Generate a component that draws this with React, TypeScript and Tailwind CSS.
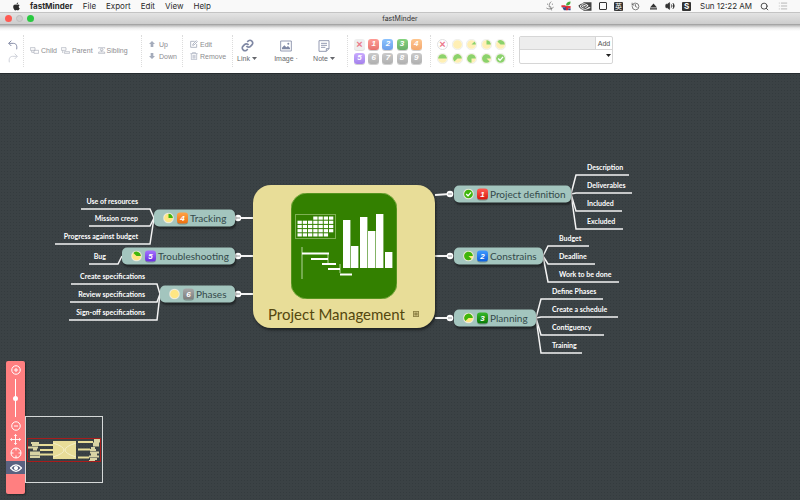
import React from 'react';
import { Search, List, History, Volume2 } from 'lucide-react';
import { FaApple } from 'react-icons/fa';
import { SiNvidia } from 'react-icons/si';

type Side = 'left' | 'right';

interface Leaf {
  text: string;
  y: number;
  end: number;
}

interface Branch {
  title: string;
  side: Side;
  x: number;
  y: number;
  width: number;
  priority: number;
  progress: number;
  bend: number;
  labelX: number;
  leaves: Leaf[];
}

// All coordinates are relative to the middle of the central topic.
const branches: Branch[] = [
  {
    title: 'Tracking', side: 'left', x: -190, y: -38, width: 81, priority: 4, progress: 2, bend: -194, labelX: -206,
    leaves: [
      { text: 'Use of resources', y: -47, end: -263 },
      { text: 'Mission creep', y: -30, end: -255 },
      { text: 'Progress against budget', y: -12, end: -289 },
    ],
  },
  {
    title: 'Troubleshooting', side: 'left', x: -222, y: 0, width: 113, priority: 5, progress: 3, bend: -226, labelX: -238,
    leaves: [{ text: 'Bug', y: 8, end: -255 }],
  },
  {
    title: 'Phases', side: 'left', x: -184, y: 38, width: 75, priority: 6, progress: 0, bend: -187, labelX: -199,
    leaves: [
      { text: 'Create specifications', y: 28, end: -273 },
      { text: 'Review specifications', y: 46, end: -274 },
      { text: 'Sign-off specifications', y: 64, end: -275 },
    ],
  },
  {
    title: 'Project definition', side: 'right', x: 110, y: -62, width: 117, priority: 1, progress: 8, bend: 232, labelX: 243,
    leaves: [
      { text: 'Description', y: -81, end: 285 },
      { text: 'Deliverables', y: -63, end: 288 },
      { text: 'Included', y: -45, end: 278 },
      { text: 'Excluded', y: -27, end: 279 },
    ],
  },
  {
    title: 'Constrains', side: 'right', x: 110, y: 0, width: 89, priority: 2, progress: 7, bend: 204, labelX: 215,
    leaves: [
      { text: 'Budget', y: -10, end: 245 },
      { text: 'Deadline', y: 8, end: 251 },
      { text: 'Work to be done', y: 26, end: 275 },
    ],
  },
  {
    title: 'Planning', side: 'right', x: 110, y: 62, width: 82, priority: 3, progress: 5, bend: 197, labelX: 208,
    leaves: [
      { text: 'Define Phases', y: 43, end: 259 },
      { text: 'Create a schedule', y: 61, end: 274 },
      { text: 'Contiguency', y: 79, end: 260 },
      { text: 'Training', y: 97, end: 238 },
    ],
  },
];

const priorityColors: Record<number, string> = {
  1: 'from-[#ff5a50] to-[#d80f08]',
  2: 'from-[#3f9bff] to-[#0b5fdc]',
  3: 'from-[#35b82c] to-[#067a06]',
  4: 'from-[#ffa245] to-[#ec6f08]',
  5: 'from-[#a672ff] to-[#6a2be0]',
  6: 'from-[#a8a8a8] to-[#7d7d7d]',
};

const PriorityBadge: React.FC<{ value: number }> = ({ value }) => (
  <span
    className={`flex size-[11px] shrink-0 items-center justify-center rounded-[3px] bg-linear-to-b font-['Liberation_Sans',sans-serif] text-[8px] leading-none font-bold italic text-white shadow-[0_1px_0_rgba(0,0,0,0.3)] ${priorityColors[Math.min(value, 6)]}`}
  >
    {value}
  </span>
);

// Eighths of a circle; the wedge always ends at three o'clock and grows counterclockwise.
const ProgressPie: React.FC<{ value: number }> = ({ value }) => {
  const angle = (value * Math.PI) / 4;
  const x = 12 + 9.5 * Math.cos(angle);
  const y = 12 - 9.5 * Math.sin(angle);
  return (
    <svg viewBox="0 0 24 24" className="size-[11px] shrink-0">
      <circle cx="12" cy="12" r="11.500" fill="#f2f2e8" stroke="#d2d4c8" strokeWidth="1" />
      <circle cx="12" cy="12" r="9.500" fill={value === 8 ? '#3fb50c' : '#ffe683'} />
      {value > 0 && value < 8 && (
        <path d={`M12 12 L21.5 12 A9.5 9.5 0 ${value > 4 ? 1 : 0} 0 ${x} ${y} Z`} fill="#3fb50c" />
      )}
      {value === 8 && <path d="M7 12 L11 16 L17.5 8.5" fill="none" stroke="#fff" strokeWidth="3" />}
    </svg>
  );
};

const AppleMenu = () => (
  <header className="flex h-3 items-center bg-[#f9f9f9] pr-3 pl-3 font-['Inter',sans-serif] text-[8px] leading-3 text-[#2b2b2b]">
    <FaApple className="size-[9px]" />
    <nav className="flex flex-1 items-center gap-[10px] pl-[9px]">
      <a href="#app" className="font-bold">fastMinder</a>
      <a href="#file">File</a>
      <a href="#export">Export</a>
      <a href="#edit">Edit</a>
      <a href="#view">View</a>
      <a href="#help">Help</a>
    </nav>
    <div className="flex items-center gap-[7px]">
      <svg viewBox="0 0 20 24" className="h-[10px] w-[8px]" fill="none" stroke="#555" strokeWidth="1.6">
        <path d="M13 1 C8 5 8 10 8 14 H12 C12 18 13 21 14 23 M4 6 V9 M16 6 V9 M1 17 C6 21 14 20 19 15" />
      </svg>
      <svg viewBox="0 0 24 24" className="size-[10px]">
        <path d="M12 11 C12 4 17 1 23 1 C23 8 19 11 12 11 Z" fill="#46a83c" />
        <path d="M1 10 H11 V15 H1 Z M10 12 H23 V18 H10 Z" fill="#e0323c" />
        <path d="M3 15 H13 V22 H7 Z M16 18 H23 V22 H18 Z" fill="#344b8c" />
        <path d="M11 16 H17 V22 H12 Z" fill="#d72834" />
      </svg>
      <SiNvidia className="h-[13px] w-[14px] text-[#444]" />
      <span className="size-2 rounded-[1px] border border-[#333]" />
      <span className="flex h-[9px] w-[9px] items-center justify-center rounded-[1px] bg-[#333] font-['Noto_Sans_CJK_SC',sans-serif] text-[7px] leading-none text-white">英</span>
      <History className="mr-[2px] ml-px size-[9px] text-[#555]" strokeWidth={2} />
      <svg viewBox="0 0 16 16" className="mx-px size-[7px]" fill="#333">
        <path d="M8 1 L16 10 H0 Z M0 12 H16 V15 H0 Z" />
      </svg>
      <Volume2 className="size-[10px] text-[#333]" fill="currentColor" strokeWidth={2} />
      <span className="flex size-[9px] items-center justify-center rounded-[1px] bg-[#333] text-[8px] leading-none font-bold text-white">S</span>
      <span className="ml-[2px] w-[50px] whitespace-nowrap">Sun 12:22 AM</span>
    </div>
    <Search className="ml-[10px] size-[9px] text-[#444]" strokeWidth={2.5} />
    <List className="ml-[9px] size-[10px] text-[#aaa]" />
  </header>
);

const TitleBar = () => (
  <div className="grid h-[13px] grid-cols-3 items-center border-y border-t-[#c4c4c4] border-b-[#a5a5a5] bg-linear-to-b from-[#e4e4e4] to-[#cccccc] px-[5px]">
    <div className="flex gap-1">
      <button aria-label="Close" className="size-[7px] rounded-full bg-[#ff5a52]" />
      <button aria-label="Minimize" className="size-[7px] rounded-full border border-[#bdbdbd] bg-[#cecece]" />
      <button aria-label="Zoom" className="size-[7px] rounded-full bg-[#29c940]" />
    </div>
    <h1 className="text-center font-['Inter',sans-serif] text-[7px] leading-none text-[#333]">fastMinder</h1>
  </div>
);

const Divider = () => <span className="h-8 w-px shrink-0 border-l border-dotted border-[#dcdcdc]" />;

const Caret = () => (
  <svg viewBox="0 0 10 6" className="h-[3px] w-[5px]" fill="currentColor"><path d="M0 0 H10 L5 6 Z" /></svg>
);

const TopicIcon: React.FC<{ kind: 'child' | 'parent' | 'sibling' }> = ({ kind }) => (
  <svg viewBox="0 0 27 21" className="h-[7px] w-[9px]" fill="none" stroke="#a9adb9" strokeWidth="2">
    {kind === 'child' && <path d="M1 2 H15 V10 H1 Z M5 10 V16 H12 M12 10 H26 V19 H12 Z" />}
    {kind === 'parent' && <path d="M1 2 H15 V10 H1 Z M5 10 V18 M10 18 V14 H26 V19 H10 Z" />}
    {kind === 'sibling' && <path d="M5 1 H23 M5 1 V5 M23 1 V5 M10 5 H18 V10 H10 Z M5 20 H23 M5 20 V15 H23 V20 M14 10 V15" />}
  </svg>
);

const Toolbar = () => (
  <div className="flex h-12 items-center bg-[linear-gradient(#b4b4b4,#ececec_3px,#ffffff_6px)] bg-white pt-1 pl-2 font-['Liberation_Sans',sans-serif] text-[7px] leading-none whitespace-nowrap text-[#8c8c90]">
    <div className="flex w-[15px] shrink-0 flex-col gap-[3px]">
      <button aria-label="Undo">
        <svg viewBox="0 0 30 30" className="size-[10px]" fill="none" stroke="#848ba6" strokeWidth="3">
          <path d="M10 2 L2 10 L10 18 M2 10 H16 C24 10 28 16 26 28" />
        </svg>
      </button>
      <button aria-label="Redo">
        <svg viewBox="0 0 30 30" className="size-[10px]" fill="none" stroke="#cfd2da" strokeWidth="3">
          <path d="M20 2 L28 10 L20 18 M28 10 H14 C6 10 2 16 4 28" />
        </svg>
      </button>
    </div>
    <Divider />
    <div className="flex w-[117px] shrink-0 gap-1 pb-px pl-[6px]">
      <button className="flex items-center gap-[2px]"><TopicIcon kind="child" />Child</button>
      <button className="flex items-center gap-[2px]"><TopicIcon kind="parent" />Parent</button>
      <button className="flex items-center gap-px"><TopicIcon kind="sibling" />Sibling</button>
    </div>
    <Divider />
    <div className="flex w-[40px] shrink-0 flex-col gap-[5px] pb-[2px] pl-[7px]">
      <button className="flex items-center gap-1">
        <svg viewBox="0 0 18 18" className="size-[6px]" fill="#a4abbb"><path d="M9 0 L18 9 H13 V18 H5 V9 H0 Z" /></svg>
        Up
      </button>
      <button className="flex items-center gap-1">
        <svg viewBox="0 0 18 18" className="size-[6px]" fill="#a4abbb"><path d="M9 18 L18 9 H13 V0 H5 V9 H0 Z" /></svg>
        Down
      </button>
    </div>
    <Divider />
    <div className="flex w-[49px] shrink-0 flex-col gap-1 pb-[2px] pl-[7px]">
      <button className="flex items-center gap-[2px]">
        <svg viewBox="0 0 24 24" className="size-[8px]" fill="none" stroke="#a4abbb" strokeWidth="2.5">
          <path d="M14 4 H2 V22 H20 V12" /><path d="M8 16 L9 12 L19 2 L22 5 L12 15 Z" />
        </svg>
        Edit
      </button>
      <button className="flex items-center gap-[2px]">
        <svg viewBox="0 0 24 24" className="size-[8px]" fill="none" stroke="#a4abbb" strokeWidth="2">
          <path d="M1 5 H23 M8 5 V1 H16 V5 M4 5 V23 H20 V5 M9 9 V20 M12 9 V20 M15 9 V20" />
        </svg>
        Remove
      </button>
    </div>
    <Divider />
    <div className="flex w-[114px] shrink-0 items-end pb-[2px] pl-1 text-[#66676c]">
      <button className="flex w-[20px] flex-col items-center gap-[3px]">
        <svg viewBox="0 0 24 24" className="size-[13px]" fill="none" stroke="#7f88a4" strokeWidth="3">
          <path d="M10 13 a5 5 0 0 0 7.5 .5 l3-3 a5 5 0 0 0 -7 -7 l-2 2" />
          <path d="M14 11 a5 5 0 0 0 -7.500 -.5 l-3 3 a5 5 0 0 0 7 7 l2 -2" />
        </svg>
        <span className="flex items-center gap-[2px]">Link <Caret /></span>
      </button>
      <button className="ml-[17px] flex w-[24px] flex-col items-center gap-[3px]">
        <svg viewBox="0 0 36 36" className="size-[12px]" fill="none" stroke="#7f88a4" strokeWidth="2.5">
          <path d="M2 3 H34 V33 H2 Z" />
          <path d="M6 28 V23 L13 16 L19 22 L24 18 L30 24 V28 Z" fill="#7f88a4" stroke="none" />
          <circle cx="25" cy="11" r="3" fill="#7f88a4" stroke="none" />
        </svg>
        <span>Image ·</span>
      </button>
      <button className="ml-[15px] flex w-[22px] flex-col items-center gap-[3px]">
        <svg viewBox="0 0 36 36" className="size-[12px]" fill="none" stroke="#7f88a4" strokeWidth="2.5">
          <path d="M3 2 H33 V26 L25 34 H3 Z M33 26 H25 V34 M9 10 H27 M9 16 H27 M9 22 H22" />
        </svg>
        <span className="flex items-center gap-[2px]">Note <Caret /></span>
      </button>
    </div>
    <Divider />
    <div className="mx-[5px] grid w-[72px] shrink-0 grid-cols-5 gap-y-[3px] pl-px opacity-60">
      <button aria-label="No priority" className="flex size-[11px] items-center justify-center rounded-[3px] bg-[#e4e4e4] text-[11px] font-bold text-[#e0203c] shadow-[0_1px_0_rgba(0,0,0,0.2)]">×</button>
      {[1, 2, 3, 4, 5, 6, 7, 8, 9].map((n) => (
        <button key={n} aria-label={`Priority ${n}`}><PriorityBadge value={n} /></button>
      ))}
    </div>
    <Divider />
    <div className="mr-[3px] ml-[6px] grid w-[73px] shrink-0 grid-cols-5 gap-y-[3px] opacity-60">
      <button aria-label="No progress" className="flex size-[11px] items-center justify-center rounded-full border border-[#ccc] text-[11px] font-bold text-[#e0203c]">×</button>
      {[0, 1, 2, 3, 4, 5, 6, 7, 8].map((n) => (
        <button key={n} aria-label={`Progress ${n}/8`}><ProgressPie value={n} /></button>
      ))}
    </div>
    <Divider />
    <div className="mb-[2px] ml-[5px] flex h-7 w-[94px] shrink-0 flex-col overflow-hidden rounded-[2px] border border-[#d6d6d6] bg-white">
      <div className="flex h-[13px] border-b border-[#d6d6d6]">
        <input aria-label="Tag" className="min-w-0 flex-1 border-r border-[#d6d6d6] bg-[#ededed]" />
        <button className="w-4 text-[#555]">Add</button>
      </div>
      <div className="relative flex-1">
        <select aria-label="Tags" className="block size-full appearance-none" />
        <span className="pointer-events-none absolute top-1 right-px text-[#222]"><Caret /></span>
      </div>
    </div>
  </div>
);

const Connectors = () => (
  <svg className="absolute top-0 left-0 size-px overflow-visible" fill="none" stroke="#f4f4f4" strokeWidth="1.5">
    {branches.map((b) => {
      const left = b.side === 'left';
      const joint = left ? b.x : b.x + b.width;
      const toggle = left ? -106 : 106;
      const edge = left ? -91 : 91;
      return (
        <g key={b.title}>
          <path d={`M${edge} ${b.y === -62 ? -61 : b.y} L${toggle} ${b.y}`} strokeWidth="2" />
          {b.leaves.map((leaf) => (
            <path key={leaf.text} d={`M${joint} ${b.y} L${b.bend} ${leaf.y} H${leaf.end}`} />
          ))}
          <circle cx={toggle} cy={b.y} r="3.300" fill="#fff" stroke="none" />
          <path d={`M${toggle - 2} ${b.y} h4`} stroke="#8b8f90" strokeWidth="1" />
        </g>
      );
    })}
  </svg>
);

const bars = [[52, 27, 8], [60, 53, 8], [69, 24, 8], [77, 38, 8], [85, 21, 8], [94, 59, 8]];

const ProjectLogo = () => (
  <svg viewBox="0 0 106 106" className="size-[106px] shrink-0">
    <rect width="106" height="106" rx="16" fill="#338000" stroke="#78a83e" />
    <rect x="4.500" y="21.500" width="40" height="24" fill="none" stroke="#7fb055" />
    {[0, 1, 2, 3, 4].map((row) =>
      [0, 1, 2, 3, 4, 5, 6].map((col) => {
        const empty = (row === 0 && col < 3) || (row === 4 && col > 5);
        return empty ? null : (
          <rect key={`${row}-${col}`} x={6.5 + col * 5.25} y={23.5 + row * 4.2} width="4.300" height="3.200" fill="#fff" />
        );
      }),
    )}
    {bars.map(([x, y, w]) => (
      <rect key={x} x={x} y={y} width={w - 0.6} height={75 - y} fill="#fff" />
    ))}
    <path d="M11 54 V86 M37 60 V72 M49 71 V80" stroke="#b5d49c" strokeWidth="1" />
    <path d="M11 60.500 H38 M20 66 H37 M31 71 H45 M37 76 H49 M49 81.500 H61" stroke="#fff" strokeWidth="2" />
  </svg>
);

const MindMap = () => (
  <div className="absolute top-[182px] left-[43%] size-0 font-['Lato',sans-serif] whitespace-nowrap">
    <Connectors />
    <div className="absolute -top-[71px] -left-[91px] flex h-[143px] w-[182px] flex-col items-center rounded-[18px] bg-[#e8dd98] pt-2 shadow-[1px_2px_3px_rgba(0,0,0,0.5)]">
      <ProjectLogo />
      <div className="flex w-full items-center justify-between pr-4 pl-[15px] text-[15px] leading-[30px] text-[#54470f]">
        <h2>Project Management</h2>
        <svg viewBox="0 0 18 18" className="size-[6px]" fill="none" stroke="#54470f" strokeWidth="2">
          <path d="M1 1 H17 V17 H1 Z M4 6 H14 M4 9 H14 M4 12 H14" />
        </svg>
      </div>
    </div>
    {branches.map((b) => (
      <React.Fragment key={b.title}>
        <div
          className="absolute flex h-[17px] -translate-y-1/2 items-center rounded-[5px] bg-[#a3c5be] pl-[9px] text-[10px] leading-none text-[#33494a] shadow-[1px_2px_2px_rgba(0,0,0,0.4)]"
          style={{ left: b.x, top: b.y, width: b.width }}
        >
          <ProgressPie value={b.progress} />
          <span className="mr-[2px] ml-[3px]"><PriorityBadge value={b.priority} /></span>
          <span className="pb-[2px]">{b.title}</span>
        </div>
        {b.leaves.map((leaf) => (
          <span
            key={leaf.text}
            className={`absolute text-[7px] leading-[10px] font-bold text-white ${b.side === 'left' ? '-translate-x-full' : ''}`}
            style={{ left: b.labelX, top: leaf.y - 13 }}
          >
            {leaf.text}
          </span>
        ))}
      </React.Fragment>
    ))}
  </div>
);

const MiniMap = () => (
  <div className="mb-[11px] flex h-[67px] w-[78px] items-center border border-[#d5d8d8]">
    <svg viewBox="0 0 76 26" className="h-[26px] w-[76px]">
      <path d="M13 8 H27 M14 13 H27 M13 17.500 H27 M52 5 H67 M52 12.500 H64 M52 20.500 H63" stroke="#e8dd98" strokeWidth="2" />
      <path d="M5 6 H13 M6 8 H14 M2 10.500 H12 M7 12.500 H11 M4 15.500 H14 M4 17.500 H14 M4 20 H14" stroke="#d9d4a4" strokeWidth="2" />
      <path d="M68 2.500 H74 M68 4.500 H74 M67 6.500 H73 M67 8.500 H73 M65 11 H69 M64 13 H70 M64 15.500 H73 M65 17.500 H71 M63 19.500 H73 M64 22 H71 M63 24 H69" stroke="#d9d4a4" strokeWidth="2" />
      <rect x="1.500" y="1.500" width="73" height="23" fill="none" stroke="#a81c1c" />
      <rect x="27" y="4" width="23" height="18" fill="#e8dd98" />
      <path d="M27 6 Q49 13 27 20 M50 6 Q28 13 50 20" fill="none" stroke="#f4efc8" />
    </svg>
  </div>
);

const NavPanel = () => (
  <div className="absolute bottom-[6px] left-[6px] flex items-end">
    <div className="flex h-[133px] w-[19px] flex-col items-center rounded-[2px] bg-[#ff7f80] pt-1 shadow-[1px_1px_2px_rgba(0,0,0,0.4)]">
      <button aria-label="Zoom in">
        <svg viewBox="0 0 20 20" className="block size-[10px]" fill="none" stroke="#fff" strokeWidth="2">
          <circle cx="10" cy="10" r="8.500" /><path d="M10 6 V14 M6 10 H14" />
        </svg>
      </button>
      <input
        type="range"
        aria-label="Zoom"
        defaultValue={50}
        className="mt-1 mb-1 block h-[38px] w-[5px] appearance-none bg-[linear-gradient(#fff,#fff)] bg-[length:1px_100%] bg-center bg-no-repeat [writing-mode:vertical-lr] [&::-webkit-slider-thumb]:size-[5px] [&::-webkit-slider-thumb]:appearance-none [&::-webkit-slider-thumb]:rounded-full [&::-webkit-slider-thumb]:bg-white"
      />
      <button aria-label="Zoom out">
        <svg viewBox="0 0 20 20" className="block size-[10px]" fill="none" stroke="#fff" strokeWidth="2">
          <circle cx="10" cy="10" r="8.500" /><path d="M6 10 H14" />
        </svg>
      </button>
      <button aria-label="Move" className="mt-[3px]">
        <svg viewBox="0 0 24 24" className="block size-[11px]" fill="none" stroke="#fff" strokeWidth="2">
          <path d="M12 1 V23 M1 12 H23 M9 4 L12 1 L15 4 M9 20 L12 23 L15 20 M4 9 L1 12 L4 15 M20 9 L23 12 L20 15" />
        </svg>
      </button>
      <button aria-label="Center" className="mt-[2px]">
        <svg viewBox="0 0 24 24" className="block size-[12px]" fill="none" stroke="#fff" strokeWidth="2">
          <circle cx="12" cy="12" r="10" /><path d="M12 2 V7 M12 17 V22 M2 12 H7 M17 12 H22" />
        </svg>
      </button>
      <button aria-label="Overview" className="mt-[2px] flex h-[13px] w-full items-center justify-center bg-[#5a6280]">
        <svg viewBox="0 0 24 16" className="h-2 w-3" fill="none" stroke="#fff" strokeWidth="2.500">
          <path d="M1 8 Q12 -5 23 8 Q12 21 1 8 Z" /><circle cx="12" cy="8" r="3" fill="#fff" />
        </svg>
      </button>
    </div>
    <MiniMap />
  </div>
);

export default function App() {
  return (
    <div className="flex min-h-screen flex-col bg-white">
      <AppleMenu />
      <TitleBar />
      <Toolbar />
      <main className="relative min-h-[420px] flex-1 overflow-hidden border-t border-[#262c2f] bg-[#3b4245] bg-[radial-gradient(#343b3e_1px,transparent_1px)] bg-[length:3px_3px]">
        <MindMap />
        <NavPanel />
      </main>
    </div>
  );
}
